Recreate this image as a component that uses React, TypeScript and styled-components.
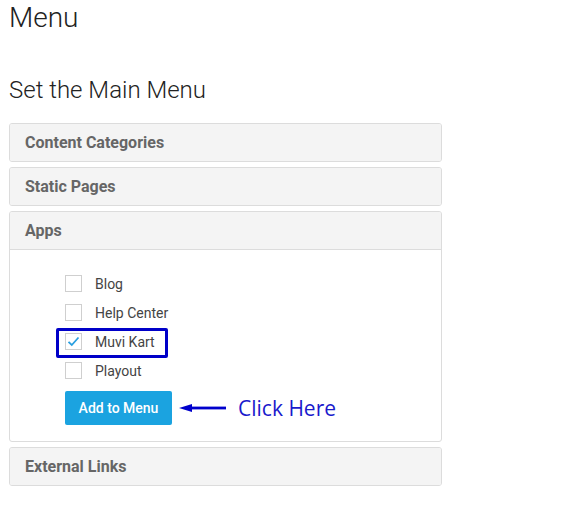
import React from "react";
import styled, { createGlobalStyle } from "styled-components";

const GlobalStyle = createGlobalStyle`
  html, body {
    margin: 0;
    padding: 0;
    background: #fff;
  }
  body {
    font-family: Roboto, "Liberation Sans", sans-serif;
    color: #333;
  }
`;

const Page = styled.div`
  padding: 0 9px;
  width: 572px;
  box-sizing: border-box;
`;

const Title = styled.h1`
  margin: 1px 0 0;
  font-size: 28px;
  line-height: 34px;
  font-weight: 300;
  color: #222;
`;

const SubTitle = styled.h2`
  margin: 39px 0 0;
  font-size: 24px;
  line-height: 32px;
  font-weight: 300;
  color: #222;
`;

const PanelGroup = styled.div`
  margin-top: 17px;
  width: 433px;
  display: flex;
  flex-direction: column;
  gap: 5px;
`;

const Panel = styled.div`
  border: 1px solid #dcdcdc;
  border-radius: 3px;
  background: #fff;
  overflow: hidden;
`;

const PanelHeading = styled.div<{ open?: boolean }>`
  height: 37px;
  display: flex;
  align-items: center;
  padding: 0 15px;
  background: #f4f4f4;
  border-bottom: ${({ open }) => (open ? "1px solid #dcdcdc" : "none")};
  font-size: 16px;
  font-weight: 700;
  color: #666;
`;

const PanelBody = styled.div`
  padding: 19px 0 16px 46px;
`;

const OptionList = styled.div`
  display: flex;
  flex-direction: column;
`;

const Option = styled.label<{ marked?: boolean }>`
  position: relative;
  height: 29px;
  display: flex;
  align-items: center;
  gap: 13px;
  padding-left: 9px;
  font-size: 14px;
  color: #444;

  ${({ marked }) =>
    marked
      ? `
    &::after {
      content: "";
      position: absolute;
      left: 0;
      top: 1px;
      width: 112px;
      height: 30px;
      box-sizing: border-box;
      border: 3px solid #0000c8;
      border-radius: 2px;
    }
  `
      : null}
`;

const Box = styled.span`
  width: 17px;
  height: 17px;
  box-sizing: border-box;
  border: 1px solid #cfcfcf;
  background: #fff;
  display: flex;
  align-items: center;
  justify-content: center;
`;

const ActionRow = styled.div`
  margin-top: 6px;
  margin-left: 9px;
  display: flex;
  align-items: center;
`;

const AddButton = styled.button`
  width: 107px;
  height: 34px;
  border: none;
  border-radius: 2px;
  background: #1ba3e0;
  color: #fff;
  font-family: Roboto, "Liberation Sans", sans-serif;
  font-size: 14px;
  font-weight: 500;
  padding: 0;
`;

const Arrow = styled.svg`
  margin-left: 7px;
  display: block;
`;

const Hint = styled.span`
  margin-left: 12px;
  font-family: "Open Sans", "Liberation Sans", sans-serif;
  font-size: 21px;
  color: #1a1acc;
  line-height: 1;
`;

const apps = [
  { label: "Blog", checked: false },
  { label: "Help Center", checked: false },
  { label: "Muvi Kart", checked: true },
  { label: "Playout", checked: false },
];

const Check = () => (
  <svg width="13" height="11" viewBox="0 0 13 11">
    <path d="M1.5 5.8 L4.8 9 L11.5 1.5" fill="none" stroke="#2a9fe0" strokeWidth="1.8" />
  </svg>
);

export default function App() {
  return (
    <Page>
      <GlobalStyle />
      <Title>Menu</Title>
      <SubTitle>Set the Main Menu</SubTitle>
      <PanelGroup>
        <Panel>
          <PanelHeading>Content Categories</PanelHeading>
        </Panel>
        <Panel>
          <PanelHeading>Static Pages</PanelHeading>
        </Panel>
        <Panel>
          <PanelHeading open>Apps</PanelHeading>
          <PanelBody>
            <OptionList>
              {apps.map((a) => (
                <Option key={a.label} marked={a.checked}>
                  <Box>{a.checked ? <Check /> : null}</Box>
                  {a.label}
                </Option>
              ))}
            </OptionList>
            <ActionRow>
              <AddButton>Add to Menu</AddButton>
              <Arrow width="47" height="10" viewBox="0 0 47 10">
                <path d="M0 5 L13 1 L13 9 Z" fill="#0000cc" />
                <rect x="10" y="3.6" width="37" height="2.8" fill="#0000cc" />
              </Arrow>
              <Hint>Click Here</Hint>
            </ActionRow>
          </PanelBody>
        </Panel>
        <Panel>
          <PanelHeading>External Links</PanelHeading>
        </Panel>
      </PanelGroup>
    </Page>
  );
}
